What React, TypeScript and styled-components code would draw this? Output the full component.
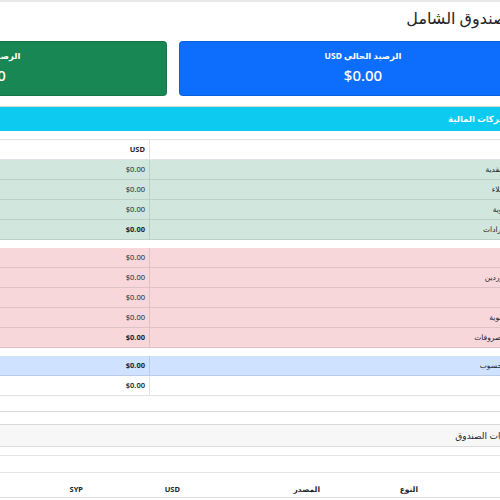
import React from 'react';
import styled, { createGlobalStyle } from 'styled-components';

const Global = createGlobalStyle`
  html, body { margin: 0; padding: 0; overflow: hidden; background: #fff; }
  body { font-family: "Noto Sans", "DejaVu Sans", sans-serif; color: #212529; }
  * { box-sizing: border-box; }
`;

const Page = styled.div`
  width: 1128px;
  margin-left: -581px;
  direction: rtl;
`;

const TopBand = styled.div`
  height: 2px;
  background: #e8e8e8;
`;

const Title = styled.h2`
  margin: 6px -8px 13px 0;
  font-size: 16px;
  line-height: 20px;
  font-weight: 500;
`;

const Cards = styled.div`
  display: grid;
  grid-template-columns: repeat(3, 1fr);
  gap: 12px;
`;

const StatCard = styled.div<{ $bg: string }>`
  height: 55px;
  padding: 8px 8px 0;
  border-radius: 4px;
  border: 1px solid rgba(0, 0, 0, 0.12);
  background: ${(p) => p.$bg};
  color: #fff;
  text-align: center;
`;

const StatLabel = styled.div`
  font-size: 8.5px;
  font-weight: 700;
  line-height: 12px;
`;

const StatValue = styled.div`
  margin-top: 4px;
  font-size: 15px;
  line-height: 18px;
  font-weight: 500;
`;

const Card = styled.div<{ $mt: number }>`
  margin-top: ${(p) => p.$mt}px;
  border: 1px solid rgba(0, 0, 0, 0.15);
  border-radius: 4px;
  overflow: hidden;
`;

const CardHeader = styled.div<{ $variant: 'info' | 'light' }>`
  height: ${(p) => (p.$variant === 'info' ? 24 : 22)}px;
  padding: ${(p) => (p.$variant === 'info' ? '0 6px' : '0 8px')};
  line-height: ${(p) => (p.$variant === 'info' ? 24 : 22)}px;
  font-size: ${(p) => (p.$variant === 'info' ? 8.5 : 9)}px;
  font-weight: ${(p) => (p.$variant === 'info' ? 600 : 500)};
  background: ${(p) => (p.$variant === 'info' ? '#0dcaf0' : '#f7f7f7')};
  color: ${(p) => (p.$variant === 'info' ? '#fff' : '#212529')};
  border-bottom: ${(p) => (p.$variant === 'info' ? 'none' : '1px solid #dcdcdc')};
`;

const CardBody = styled.div`
  padding: 8px;
`;

const Table = styled.table<{ $mb: number }>`
  width: 100%;
  table-layout: fixed;
  border-collapse: separate;
  border-spacing: 0;
  font-size: 7.5px;
  margin-bottom: ${(p) => p.$mb}px;
`;

type Variant = 'success' | 'danger' | 'primary' | 'plain' | 'head';

const palette: Record<Variant, { bg: string; line: string }> = {
  success: { bg: '#d1e7dd', line: '#bdd0c7' },
  danger: { bg: '#f8d7da', line: '#dfc2c4' },
  primary: { bg: '#cfe2ff', line: '#bacbe6' },
  plain: { bg: '#ffffff', line: '#dee2e6' },
  head: { bg: '#ffffff', line: '#dee2e6' },
};

const Cell = styled.td<{ $v: Variant; $bold?: boolean; $semi?: boolean; $divider?: boolean; $top?: boolean }>`
  height: 20px;
  padding: 0 4px;
  line-height: 19px;
  text-align: right;
  white-space: nowrap;
  overflow: hidden;
  background: ${(p) => palette[p.$v].bg};
  border-bottom: 1px solid ${(p) => palette[p.$v].line};
  border-top: ${(p) => (p.$top ? `1px solid ${palette[p.$v].line}` : 'none')};
  border-left: ${(p) => (p.$divider ? `1px solid ${palette[p.$v].line}` : 'none')};
  font-weight: ${(p) => (p.$bold ? 700 : p.$semi ? 600 : 400)};
  color: #212529;
`;

const Spacer = styled.td`
  height: 8px;
  padding: 0;
`;

const EmptyRow = styled.td`
  height: 18px;
  padding: 0;
  border-top: 1px solid #e3e3e3;
  border-bottom: 1px solid #e3e3e3;
`;

const HeadCell = styled.th`
  height: 25px;
  padding: 0 4px 2px;
  vertical-align: bottom;
  text-align: right;
  font-size: 7.5px;
  font-weight: 700;
  line-height: 12px;
  border-bottom: 1px solid #dcdcdc;
  white-space: nowrap;
`;

type Row = { label: string; usd: string; syp: string; bold?: boolean };

const income: Row[] = [
  { label: 'المبيعات النقدية', usd: '$0.00', syp: '0 ل.س' },
  { label: 'دفعات العملاء', usd: '$0.00', syp: '0 ل.س' },
  { label: 'إيرادات ثانوية', usd: '$0.00', syp: '0 ل.س' },
  { label: 'إجمالي الإيرادات', usd: '$0.00', syp: '0 ل.س', bold: true },
];

const expenses: Row[] = [
  { label: 'المشتريات', usd: '$0.00', syp: '0 ل.س' },
  { label: 'دفعات الموردين', usd: '$0.00', syp: '0 ل.س' },
  { label: 'الرواتب', usd: '$0.00', syp: '0 ل.س' },
  { label: 'مصاريف ثانوية', usd: '$0.00', syp: '0 ل.س' },
  { label: 'إجمالي المصروفات', usd: '$0.00', syp: '0 ل.س', bold: true },
];

const balance: Row[] = [
  { label: 'الرصيد المحسوب', usd: '$0.00', syp: '0 ل.س', bold: true },
];

function Section({ rows, v }: { rows: Row[]; v: Variant }) {
  return (
    <>
      {rows.map((r) => (
        <tr key={r.label}>
          <Cell $v={v} $divider>{r.label}</Cell>
          <Cell $v={v} $bold={r.bold}>{r.usd}</Cell>
          <Cell $v={v} $bold={r.bold}>{r.syp}</Cell>
        </tr>
      ))}
    </>
  );
}

export default function App() {
  return (
    <>
      <Global />
      <Page>
        <TopBand />
        <Title>تقرير الصندوق الشامل</Title>
        <Cards>
          <StatCard $bg="#0d6efd">
            <StatLabel>الرصيد الحالي USD</StatLabel>
            <StatValue>$0.00</StatValue>
          </StatCard>
          <StatCard $bg="#198754">
            <StatLabel>الرصيد الحالي SYP</StatLabel>
            <StatValue>0 ل.س</StatValue>
          </StatCard>
          <StatCard $bg="#6c757d">
            <StatLabel>عدد الحركات</StatLabel>
            <StatValue>0</StatValue>
          </StatCard>
        </Cards>

        <Card $mt={10}>
          <CardHeader $variant="info">ملخص الحركات المالية</CardHeader>
          <CardBody>
            <Table $mb={7}>
              <colgroup>
                <col style={{ width: 389 }} />
                <col />
                <col />
              </colgroup>
              <tbody>
                <tr>
                  <Cell $v="head" $top $divider $bold>البند</Cell>
                  <Cell $v="head" $top $bold>USD</Cell>
                  <Cell $v="head" $top $bold>SYP</Cell>
                </tr>
                <Section rows={income} v="success" />
                <tr><Spacer colSpan={3} /></tr>
                <Section rows={expenses} v="danger" />
                <tr><Spacer colSpan={3} /></tr>
                <Section rows={balance} v="primary" />
                <tr>
                  <Cell $v="plain" $divider>الفرق</Cell>
                  <Cell $v="plain" $semi>$0.00</Cell>
                  <Cell $v="plain" $semi>0 ل.س</Cell>
                </tr>
              </tbody>
            </Table>
          </CardBody>
        </Card>

        <Card $mt={12}>
          <CardHeader $variant="light">سجل حركات الصندوق</CardHeader>
          <CardBody>
            <Table $mb={0}>
              <colgroup>
                <col style={{ width: 116 }} />
                <col style={{ width: 98 }} />
                <col style={{ width: 140 }} />
                <col style={{ width: 97 }} />
                <col style={{ width: 97 }} />
                <col />
              </colgroup>
              <tbody>
                <tr><EmptyRow colSpan={6} /></tr>
                <tr>
                  <HeadCell>التاريخ</HeadCell>
                  <HeadCell>النوع</HeadCell>
                  <HeadCell>المصدر</HeadCell>
                  <HeadCell>USD</HeadCell>
                  <HeadCell>SYP</HeadCell>
                  <HeadCell>الوصف</HeadCell>
                </tr>
              </tbody>
            </Table>
          </CardBody>
        </Card>
      </Page>
    </>
  );
}
